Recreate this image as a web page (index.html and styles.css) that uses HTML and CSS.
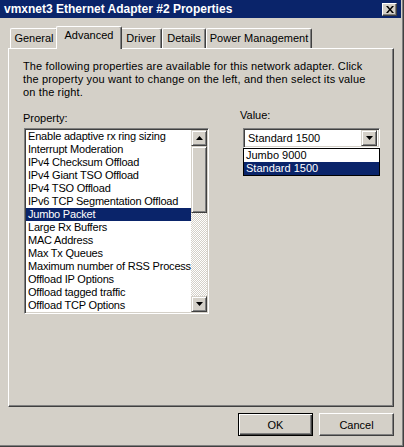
FILE: index.html
```html
<!DOCTYPE html>
<html>
<head>
<meta charset="utf-8">
<link rel="stylesheet" href="styles.css">
</head>
<body>
<div class="window">
  <div class="titlebar">
    <span class="title">vmxnet3 Ethernet Adapter #2 Properties</span>
    <span class="close"><svg width="8" height="7" viewBox="0 0 8 7"><path d="M0 0h2l2 2.5L6 0h2L5 3.5 8 7H6L4 4.5 2 7H0l3-3.5z" fill="#000"/></svg></span>
  </div>
  <div class="tabs">
    <div class="tab t-general">General</div>
    <div class="tab t-advanced active">Advanced</div>
    <div class="tab t-driver">Driver</div>
    <div class="tab t-details">Details</div>
    <div class="tab t-power">Power Management</div>
  </div>
  <div class="panel">
    <p class="intro">The following properties are available for this network adapter. Click<br>the property you want to change on the left, and then select its value<br>on the right.</p>
    <div class="cols">
      <div class="left">
        <div class="label prop-label">Property:</div>
        <div class="listbox">
          <ul class="items">
            <li>Enable adaptive rx ring sizing</li>
            <li>Interrupt Moderation</li>
            <li>IPv4 Checksum Offload</li>
            <li>IPv4 Giant TSO Offload</li>
            <li>IPv4 TSO Offload</li>
            <li>IPv6 TCP Segmentation Offload</li>
            <li class="sel">Jumbo Packet</li>
            <li>Large Rx Buffers</li>
            <li>MAC Address</li>
            <li>Max Tx Queues</li>
            <li>Maximum number of RSS Processors</li>
            <li>Offload IP Options</li>
            <li>Offload tagged traffic</li>
            <li>Offload TCP Options</li>
          </ul>
          <div class="scrollbar">
            <div class="sbtn"><svg width="7" height="4" viewBox="0 0 7 4"><path d="M3.5 0L7 4H0z" fill="#000"/></svg></div>
            <div class="thumb"></div>
            <div class="track"></div>
            <div class="sbtn"><svg width="7" height="4" viewBox="0 0 7 4"><path d="M0 0h7L3.5 4z" fill="#000"/></svg></div>
          </div>
        </div>
      </div>
      <div class="right">
        <div class="label value-label">Value:</div>
        <div class="combo">
          <span class="combo-text">Standard 1500</span>
          <span class="combo-btn"><svg width="7" height="4" viewBox="0 0 7 4"><path d="M0 0h7L3.5 4z" fill="#000"/></svg></span>
        </div>
        <ul class="dropdown">
          <li>Jumbo 9000</li>
          <li class="sel">Standard 1500</li>
        </ul>
      </div>
    </div>
  </div>
  <div class="buttons">
    <div class="btn default"><span>OK</span></div>
    <div class="btn"><span>Cancel</span></div>
  </div>
</div>
</body>
</html>
```

FILE: styles.css
```css
* { box-sizing: border-box; }
html, body { margin: 0; padding: 0; background: #d4d0c8; }
body {
  font-family: "Liberation Sans", Arial, sans-serif;
  font-size: 11px;
  color: #000;
}
.window {
  width: 404px;
  height: 447px;
  background: #d4d0c8;
  border-right: 1px solid #404040;
  border-bottom: 1px solid #404040;
  box-shadow: inset -1px -1px 0 #808080;
  display: flex;
  flex-direction: column;
  overflow: hidden;
}
.titlebar {
  height: 18px;
  margin-right: 2px;
  background: #0a246a;
  display: flex;
  align-items: center;
  justify-content: space-between;
  padding: 0 4px 0 4px;
}
.title {
  color: #fff;
  font-weight: bold;
  font-size: 12px;
}
.close {
  width: 15px;
  height: 13px;
  background: #d4d0c8;
  border-top: 1px solid #fff;
  border-left: 1px solid #fff;
  border-right: 1px solid #404040;
  border-bottom: 1px solid #404040;
  box-shadow: inset -1px -1px 0 #808080;
  display: flex;
  align-items: center;
  justify-content: center;
}
.tabs {
  display: flex;
  align-items: flex-end;
  margin: 8px 0 0 10px;
  height: 22px;
  position: relative;
  z-index: 1;
}
.tab {
  height: 20px;
  padding: 3px 0 0 0;
  text-align: center;
  border-left: 1px solid #fff;
  border-top: 1px solid #fff;
  border-right: 1px solid #404040;
  box-shadow: inset -1px 0 0 #808080;
  border-top-left-radius: 2px;
  border-top-right-radius: 2px;
  background: #d4d0c8;
}
.t-general { width: 48px; }
.t-advanced { width: 62px; }
.t-driver { width: 42px; }
.t-details { width: 44px; }
.t-power { width: 106px; }
.tab.active {
  height: 23px;
  margin: 0 -2px -1px -2px;
  width: 66px;
  padding-top: 2px;
  position: relative;
  z-index: 2;
}
.panel {
  margin: 0 0 0 8px;
  width: 386px;
  height: 359px;
  border-left: 1px solid #fff;
  border-top: 1px solid #fff;
  border-right: 1px solid #404040;
  border-bottom: 1px solid #404040;
  box-shadow: inset -1px -1px 0 #808080;
  padding: 11px 0 0 14px;
}
.intro {
  margin: 0;
  line-height: 13px;
  letter-spacing: 0.14px;
}
.cols {
  display: flex;
  margin-top: 13px;
}
.label { line-height: 13px; }
.left { width: 186px; }
.prop-label { margin-bottom: 3px; }
.listbox {
  display: flex;
  margin-left: 1px;
  width: 185px;
  height: 186px;
  border-top: 1px solid #808080;
  border-left: 1px solid #808080;
  border-right: 1px solid #fff;
  border-bottom: 1px solid #fff;
  box-shadow: inset 1px 1px 0 #404040, inset -1px -1px 0 #d4d0c8;
  padding: 1px;
  background: #fff;
}
.items {
  list-style: none;
  margin: 0;
  padding: 0;
  flex: 1;
  overflow: hidden;
  background: #fff;
  letter-spacing: -0.2px;
}
.items li, .dropdown li {
  height: 13px;
  line-height: 13px;
  padding-left: 2px;
  white-space: nowrap;
  overflow: hidden;
}
.sel { background: #0a246a; color: #fff; }
.scrollbar {
  width: 16px;
  display: flex;
  flex-direction: column;
}
.sbtn, .thumb, .combo-btn {
  background: #d4d0c8;
  border-top: 1px solid #d4d0c8;
  border-left: 1px solid #d4d0c8;
  border-right: 1px solid #404040;
  border-bottom: 1px solid #404040;
  box-shadow: inset 1px 1px 0 #fff, inset -1px -1px 0 #808080;
}
.sbtn {
  height: 16px;
  display: flex;
  align-items: center;
  justify-content: center;
}
.thumb { height: 67px; }
.track {
  flex: 1;
  background-color: #fff;
  background-image: repeating-conic-gradient(#d4d0c8 0 25%, #fff 0 50%);
  background-size: 2px 2px;
}
.right { margin-left: 34px; }
.value-label { margin: -3px 0 6px -3px; }
.combo {
  width: 137px;
  height: 20px;
  background: #fff;
  border-top: 1px solid #808080;
  border-left: 1px solid #808080;
  border-right: 1px solid #fff;
  border-bottom: 1px solid #fff;
  box-shadow: inset 1px 1px 0 #404040, inset -1px -1px 0 #d4d0c8;
  display: flex;
  align-items: center;
  justify-content: space-between;
  padding: 2px 2px 2px 4px;
}
.combo-btn {
  width: 16px;
  height: 16px;
  display: flex;
  align-items: center;
  justify-content: center;
}
.dropdown {
  list-style: none;
  margin: 0;
  width: 137px;
  padding: 0;
  border: 1px solid #000;
  background: #fff;
}
.dropdown li { padding-left: 2px; }
.buttons {
  display: flex;
  justify-content: flex-end;
  gap: 6px;
  margin: 6px 9px 0 0;
}
.btn {
  width: 75px;
  height: 23px;
  border-top: 1px solid #fff;
  border-left: 1px solid #fff;
  border-right: 1px solid #404040;
  border-bottom: 1px solid #404040;
  box-shadow: inset -1px -1px 0 #808080;
  display: flex;
  align-items: center;
  justify-content: center;
}
.btn.default {
  border: 1px solid #000;
  box-shadow: inset 1px 1px 0 #fff, inset -1px -1px 0 #404040, inset -2px -2px 0 #808080;
}
```
